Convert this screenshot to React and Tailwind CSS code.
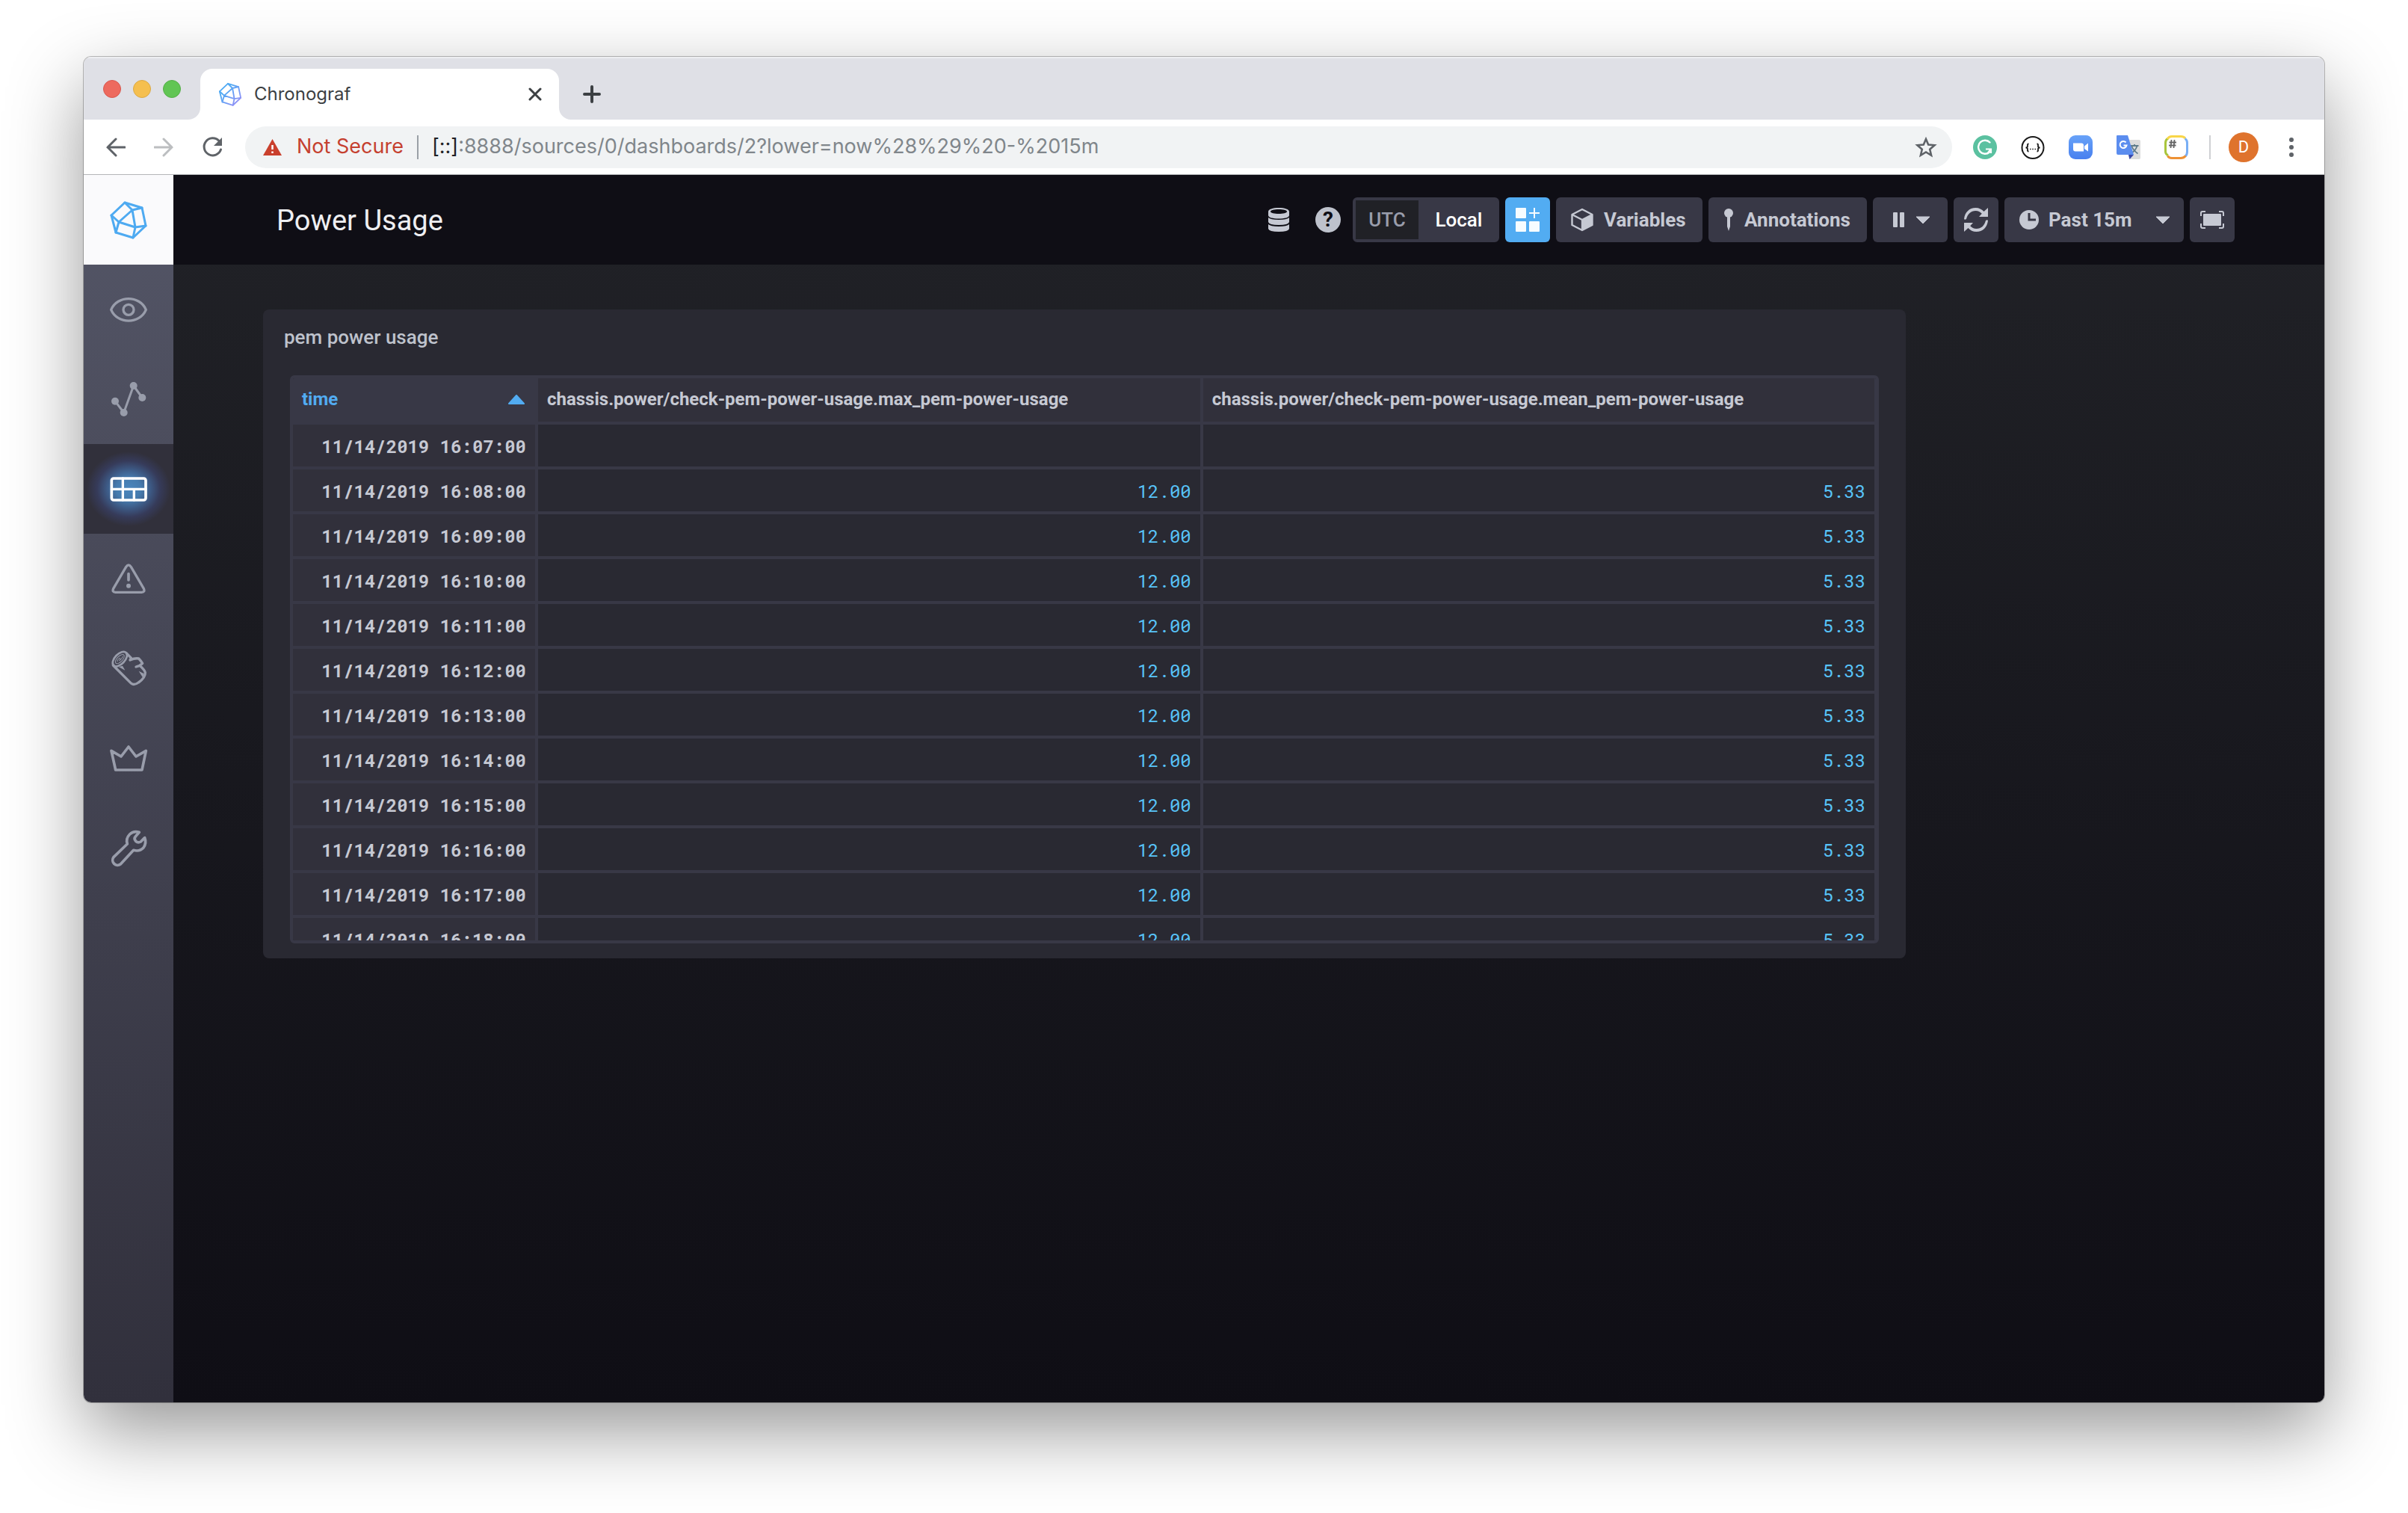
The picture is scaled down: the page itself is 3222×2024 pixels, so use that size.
import React from "react";

function LogoShape({ className, stroke }) {
  return (
    <svg viewBox="0 0 50 52" className={className} fill="none" stroke={stroke} strokeWidth="3" strokeLinejoin="round" strokeLinecap="round" aria-hidden="true">
      <defs>
        <linearGradient id="tabLogo" x1="0" y1="0" x2="1" y2="1">
          <stop offset="0.3" stopColor="#4fa9f3" />
          <stop offset="1" stopColor="#a08cf7" />
        </linearGradient>
      </defs>
      <path d="M20 3 43 10 48 34 31 50 8 43 2 20Z" />
      <path d="M20 3 30 13 43 10M30 13 12 29 34 36ZM2 20 12 29 8 43M48 34 34 36 31 50" />
    </svg>
  );
}

/* ---------- Browser chrome ---------- */

function TabFlare({ className }) {
  return (
    <svg viewBox="0 0 16 16" className={className} aria-hidden="true">
      <path d="M16 0V16H0A16 16 0 0 0 16 0Z" fill="#fff" />
    </svg>
  );
}

function TabStrip() {
  return (
    <div className="flex h-[84px] items-end bg-[#dfe0e6] shadow-[inset_0_2px_1px_#eeeff2]">
      <div className="flex h-[82px] items-center gap-4 pl-[26px]">
        <button aria-label="Close window" className="size-6 rounded-full border border-[#d8584f] bg-[#ed6a5e]" />
        <button aria-label="Minimize window" className="size-6 rounded-full border border-[#dba944] bg-[#f5bf4f]" />
        <button aria-label="Zoom window" className="size-6 rounded-full border border-[#54ae48] bg-[#61c554]" />
      </div>
      <TabFlare className="ml-[10px] size-4" />
      <div className="flex h-[68px] w-[480px] items-center rounded-t-2xl bg-white pl-6 pr-5">
        <LogoShape className="size-8" stroke="url(#tabLogo)" />
        <span className="ml-4 flex-1 font-[Inter,sans-serif] text-2xl text-[#3c4043]">Chronograf</span>
        <button aria-label="Close tab" className="grid size-6 place-items-center">
          <svg viewBox="0 0 18 18" className="size-[18px]" stroke="#3c4043" strokeWidth="3" strokeLinecap="round">
            <path d="M2 2 16 16M16 2 2 16" />
          </svg>
        </button>
      </div>
      <TabFlare className="size-4 -scale-x-100" />
      <button aria-label="New tab" className="ml-4 grid h-[68px] w-6 place-items-center">
        <svg viewBox="0 0 24 24" className="size-6" stroke="#3c4043" strokeWidth="4" strokeLinecap="round">
          <path d="M2 12H22M12 2V22" />
        </svg>
      </button>
    </div>
  );
}

function Extensions() {
  return (
    <div className="flex items-center gap-8">
      <button aria-label="Grammarly">
        <svg viewBox="0 0 32 32" className="size-8">
          <circle cx="16" cy="16" r="16" fill="#5bc1a0" />
          <path d="M22.5 9.5A9 9 0 1 0 22 22.5" fill="none" stroke="#fff" strokeWidth="2.4" strokeLinecap="round" />
          <path d="M17 18.5H24V24M23.5 19 20 23.5" fill="none" stroke="#fff" strokeWidth="2.2" />
        </svg>
      </button>
      <button aria-label="JSON viewer">
        <svg viewBox="0 0 32 32" className="size-8" fill="none" stroke="#1a1a1a">
          <circle cx="16" cy="16.5" r="14.5" strokeWidth="2" />
          <path d="M10.5 11.5C8.5 11.5 9 13 9 14.5S8 16.5 6.5 16.5C8 16.5 9 17 9 18.5S8.5 21.5 10.5 21.5M21.5 11.5C23.5 11.5 23 13 23 14.5S24 16.5 25.5 16.5C24 16.5 23 17 23 18.5S23.5 21.5 21.5 21.5" strokeWidth="1.8" />
          <path d="M12 18.5H13.5M15.25 18.5H16.75M18.5 18.5H20" strokeWidth="1.5" />
        </svg>
      </button>
      <button aria-label="Zoom">
        <svg viewBox="0 0 32 32" className="size-8">
          <defs>
            <linearGradient id="zoomFill" x1="0" y1="0" x2="0" y2="1">
              <stop offset="0" stopColor="#68a2f8" />
              <stop offset="1" stopColor="#4880ef" />
            </linearGradient>
          </defs>
          <rect width="32" height="32" rx="9" fill="url(#zoomFill)" />
          <path d="M6 10.5H17Q20 10.5 20 13.5V21.5H9Q6 21.5 6 18.5ZM21 14.5 26 10.5V21.5L21 18Z" fill="#fff" />
        </svg>
      </button>
      <button aria-label="Google Translate">
        <svg viewBox="0 0 32 32" className="size-8">
          <path d="M12 6H30Q32 6 32 8V30Q32 32 30 32H17Z" fill="#dcdcdc" />
          <path d="M19 14H29.5M24 12V14M27.5 14C26.5 18 23 22 19.5 24M20.5 15C22 19 25 22 28.5 24.5" fill="none" stroke="#607d8b" strokeWidth="1.8" />
          <path d="M16 26H23L17.5 32Z" fill="#3949ab" />
          <path d="M1 0H15L23 26H2Q0 26 0 24V1Q0 0 1 0Z" fill="#5b8def" />
          <path d="M12.5 9.5A4.5 4.5 0 1 0 13.5 13.5H9.5" fill="none" stroke="#fff" strokeWidth="2" />
        </svg>
      </button>
      <button aria-label="Hash extension">
        <svg viewBox="0 0 32 32" className="size-8" fill="none">
          <path d="M5 27Q1.500 25 1.500 22V10Q1.500 6 5 4" stroke="#a9c53c" strokeWidth="3" />
          <path d="M4 5Q6 1.500 10 1.500H22Q26 1.500 28 4" stroke="#f9d649" strokeWidth="3" />
          <path d="M27.500 4.500Q30.500 6 30.500 10V22Q30.500 26 28 28" stroke="#78aef5" strokeWidth="3" />
          <path d="M4.500 27.500Q6 30.500 10 30.500H22Q26 30.500 28.500 27.500" stroke="#ee9135" strokeWidth="3" />
          <path d="M9.500 6 8.500 17M13.500 6 12.500 17M6.500 9.500H16M6 13.500H15.500" stroke="#666" strokeWidth="1.8" />
        </svg>
      </button>
    </div>
  );
}

function AddressBar() {
  return (
    <div className="flex h-[74px] items-center border-b border-[#b4b6b8] bg-white pr-[38px]">
      <div className="flex items-center gap-[38px] pl-[30px]">
        <button aria-label="Back">
          <svg viewBox="0 0 26 26" className="size-[26px]" fill="none" stroke="#5f6368" strokeWidth="3" strokeLinecap="round">
            <path d="M25 13H2M13 2 2 13 13 24" />
          </svg>
        </button>
        <button aria-label="Forward">
          <svg viewBox="0 0 26 26" className="size-[26px]" fill="none" stroke="#bcbec0" strokeWidth="3" strokeLinecap="round">
            <path d="M1 13H24M13 2 24 13 13 24" />
          </svg>
        </button>
        <button aria-label="Reload">
          <svg viewBox="0 0 28 28" className="size-7">
            <path d="M23 5.500A11.500 11.500 0 1 0 25.500 17" fill="none" stroke="#5f6368" strokeWidth="3" strokeLinecap="round" />
            <path d="M27 1V12H16Z" fill="#5f6368" />
          </svg>
        </button>
      </div>
      <div className="ml-[30px] flex h-14 flex-1 items-center rounded-full bg-[#f1f3f4] pl-6 pr-5 font-[Inter,sans-serif] text-[27px]">
        <svg viewBox="0 0 25 22" className="h-[22px] w-[25px]" aria-hidden="true">
          <path d="M12.500 0 25 22H0Z" fill="#c9402d" />
          <path d="M12.500 8V14M12.500 16.500V19" stroke="#fff" strokeWidth="2.5" />
        </svg>
        <span className="ml-5 text-[#c5402f]">Not Secure</span>
        <span className="mx-[18px] h-8 w-0.5 bg-[#9aa0a6]" />
        <label htmlFor="address" className="text-[#202124]">[::]</label>
        <input id="address" defaultValue=":8888/sources/0/dashboards/2?lower=now%28%29%20-%2015m" className="min-w-0 flex-1 bg-transparent text-[#80868b] outline-none" />
        <button aria-label="Bookmark this page">
          <svg viewBox="0 0 30 30" className="size-[30px]" fill="none" stroke="#5f6368" strokeWidth="2.6">
            <path d="M15 4 18.200 11.600 26.500 12.300 20.200 17.700 22.100 25.800 15 21.500 7.900 25.800 9.800 17.700 3.500 12.300 11.800 11.600Z" />
          </svg>
        </button>
      </div>
      <div className="ml-7 flex items-center">
        <Extensions />
        <span className="ml-7 mr-6 h-8 w-0.5 bg-[#cfd0d3]" />
        <button className="size-10 rounded-full bg-[#df732d] font-[Roboto,sans-serif] text-[22px] text-white">D</button>
        <button aria-label="Browser menu" className="ml-[38px]">
          <svg viewBox="0 0 12 28" className="h-7 w-3" fill="#5f6368">
            <circle cx="6" cy="4" r="3" />
            <circle cx="6" cy="14" r="3" />
            <circle cx="6" cy="24" r="3" />
          </svg>
        </button>
      </div>
    </div>
  );
}

/* ---------- Side navigation ---------- */

const navItems = [
  {
    name: "Host List",
    art: (
      <g strokeWidth="10">
        <path d="M20 91C45 32 135 32 160 91C135 150 45 150 20 91Z" />
        <circle cx="90" cy="91" r="21" />
      </g>
    ),
  },
  {
    name: "Explore",
    art: (
      <g strokeWidth="9">
        <path d="M36 98 71 144 110 36 145 84" />
        <g fill="currentColor" stroke="none">
          <circle cx="36" cy="98" r="15" />
          <circle cx="71" cy="144" r="15" />
          <circle cx="110" cy="36" r="15" />
          <circle cx="145" cy="84" r="15" />
        </g>
      </g>
    ),
  },
  {
    name: "Dashboards",
    active: true,
    art: (
      <g strokeWidth="11">
        <rect x="22" y="48" width="137" height="87" rx="8" />
        <path d="M22 91H159M67 48V135M112 91V135" strokeWidth="10" />
      </g>
    ),
  },
  {
    name: "Alerting",
    art: (
      <g strokeWidth="10">
        <path d="M80 43Q90 28 100 43L151 130Q157 145 143 145H37Q23 145 29 130Z" />
        <path d="M90 71V96" strokeWidth="11" />
        <circle cx="90" cy="119" r="9" fill="currentColor" stroke="none" />
      </g>
    ),
  },
  {
    name: "Log Viewer",
    art: (
      <g strokeWidth="10">
        <ellipse cx="55" cy="53" rx="36" ry="20" transform="rotate(-46 55 53)" strokeWidth="8" />
        <ellipse cx="55" cy="53" rx="23" ry="11" transform="rotate(-46 55 53)" strokeWidth="3" />
        <path d="M45 62Q47 50 56 49Q58 53 53 59Q62 56 67 43" strokeWidth="3" />
        <path d="M28 78 101 151Q112 160 130 147Q158 128 157 107Q154 96 137 81" />
        <path d="M82 30 101 49 96 57Q116 48 131 51Q138 58 146 70Q138 79 120 84" />
        <path d="M50 84 76 98 66 80Z" fill="currentColor" stroke="none" />
        <path d="M131 101 152 112 148 128Q140 116 131 101Z" fill="currentColor" stroke="none" />
      </g>
    ),
  },
  {
    name: "Admin",
    art: <path d="M21 61 60 84 90 45 120 84 160 61 144 138H38Z" strokeWidth="11" />,
  },
  {
    name: "Configuration",
    art: (
      <path
        d="M133 28Q110 21 95 36Q78 53 85 75L30 128A20 20 0 0 0 58 156L110 100Q134 107 150 90Q163 72 155 50L139 66Q128 72 119 64Q110 54 118 45Z"
        strokeWidth="11"
      />
    ),
  },
];

function SideNav() {
  return (
    <nav className="flex w-[120px] flex-col bg-linear-to-b from-[#545667] to-[#31303c]">
      <a href="#home" aria-label="Chronograf home" className="grid h-[120px] place-items-center bg-[#fafafc]">
        <LogoShape className="h-[52px] w-[50px]" stroke="#4eaaf1" />
      </a>
      {navItems.map((item) => (
        <a
          key={item.name}
          href="#nav"
          aria-label={item.name}
          className={
            item.active
              ? "grid h-[120px] place-items-center bg-[#31303b] bg-[radial-gradient(ellipse_56px_50px_at_center,#4b86bd_0%,#467bae_30%,#3c5680_55%,#363b5a_75%,#31303b_100%)] text-white"
              : "grid h-[120px] place-items-center text-[#999dab]"
          }
        >
          <svg viewBox="0 0 180 180" className="size-[60px]" fill="none" stroke="currentColor" strokeLinejoin="round" strokeLinecap="round">
            {item.art}
          </svg>
        </a>
      ))}
    </nav>
  );
}

/* ---------- Dashboard header ---------- */

function Caret() {
  return (
    <svg viewBox="0 0 20 11" className="h-[11px] w-5" fill="currentColor" stroke="currentColor" strokeLinejoin="round" aria-hidden="true">
      <path d="M1 1H19L10 10Z" />
    </svg>
  );
}

function DashboardHeader() {
  return (
    <header className="flex h-[120px] items-center justify-between bg-[#0f0e15] pl-[138px] pr-[120px] text-[26px] font-bold text-[#c6c9d3]">
      <h1 className="pt-0.5 text-[38px] font-normal text-[#eeeff2]">Power Usage</h1>
      <div className="flex items-center gap-2">
        <button aria-label="Sources" className="mr-[27px]">
          <svg viewBox="0 0 28 32" className="h-8 w-7" fill="currentColor">
            <path fillRule="evenodd" d="M14 0C22 0 28 2 28 5V10C28 13 22 14.500 14 14.500S0 13 0 10V5C0 2 6 0 14 0ZM14 2C8 2 3 3.200 3 5S8 8 14 8 25 6.800 25 5 20 2 14 2Z" />
            <path d="M0 13Q3 16 14 16T28 13V19Q27 23 14 23T0 19ZM0 22Q3 25 14 25T28 22V28Q27 32 14 32T0 28Z" />
          </svg>
        </button>
        <button aria-label="Help" className="mr-2 grid size-[34px] place-items-center rounded-full bg-[#bec2cc] text-[28px] leading-none text-[#0f0e15]">
          ?
        </button>
        <div className="flex h-[60px] rounded-md border-4 border-[#383846] bg-[#383846]">
          <button className="w-[84px] bg-[#202126] font-medium text-[#999dab]">UTC</button>
          <button className="w-[104px] pl-1 font-medium text-white">Local</button>
        </div>
        <button aria-label="Add cell" className="grid size-[60px] place-items-center rounded-md bg-[#52acf2]">
          <svg viewBox="0 0 32 32" className="size-8" fill="#f6fcff">
            <rect width="14" height="14" rx="1" />
            <rect y="18" width="14" height="14" rx="1" />
            <rect x="18" y="18" width="14" height="14" rx="1" />
            <path d="M24 0H26V6H32V8H26V14H24V8H18V6H24Z" />
          </svg>
        </button>
        <button className="flex h-[60px] w-[196px] items-center gap-[14px] rounded-md bg-[#383846] pl-5">
          <svg viewBox="0 0 30 32" className="h-8 w-[30px]" aria-hidden="true">
            <path d="M15 2 28.500 9V23L15 30 1.500 23V9ZM1.500 9 15 16 28.500 9M15 16V30" fill="none" stroke="currentColor" strokeWidth="2.4" strokeLinejoin="round" />
            <path d="M15 16 28.500 9V23L15 30Z" fill="currentColor" />
          </svg>
          Variables
        </button>
        <button className="flex h-[60px] w-[212px] items-center gap-[14px] rounded-md bg-[#383846] pl-5">
          <svg viewBox="0 0 14 30" className="h-[30px] w-[14px]" fill="currentColor" aria-hidden="true">
            <circle cx="7" cy="6" r="6" />
            <path d="M5 10H9V24L7 30 5 24Z" />
          </svg>
          Annotations
        </button>
        <button aria-label="Auto refresh: paused" className="flex h-[60px] w-[100px] items-center gap-[14px] rounded-md bg-[#383846] pl-[27px]">
          <svg viewBox="0 0 16 20" className="h-5 w-4" fill="currentColor">
            <rect width="6" height="20" rx="1" />
            <rect x="9" width="6" height="20" rx="1" />
          </svg>
          <Caret />
        </button>
        <button aria-label="Refresh" className="grid size-[60px] place-items-center rounded-md bg-[#383846]">
          <svg viewBox="0 0 32 32" className="size-8" fill="currentColor">
            <path d="M0 15C1 6 7 0 15.500 0C20 0 24 2 26.500 5L32 0V12H20L23.800 7.800C21.500 5.500 19 4 15.500 4C9 4 5 8 3 15Q1 16.500 0 15Z" />
            <path d="M32 17C31 26 25 32 16.500 32C12 32 8 30 5.500 27L0 32V20H12L8.200 24.200C10.500 26.500 13 28 16.500 28C23 28 27 24 29 17Q31 15.500 32 17Z" />
          </svg>
        </button>
        <label className="flex h-[60px] w-[240px] items-center rounded-md bg-[#383846] pl-5 pr-[18px]">
          <svg viewBox="0 0 26 26" className="size-[26px]" aria-hidden="true">
            <circle cx="13" cy="13" r="13" fill="currentColor" />
            <path d="M13 4V13H22" fill="none" stroke="#383846" strokeWidth="3" />
          </svg>
          <select aria-label="Time range" className="ml-[13px] flex-1 appearance-none bg-transparent outline-none">
            <option>Past 15m</option>
          </select>
          <Caret />
        </label>
        <button aria-label="Presentation mode" className="grid size-[60px] place-items-center rounded-md bg-[#383846]">
          <svg viewBox="0 0 32 24" className="h-6 w-8">
            <rect x="4" y="4" width="24" height="16" rx="1" fill="currentColor" />
            <path d="M1 7V3Q1 1 3 1H7M25 1H29Q31 1 31 3V7M31 17V21Q31 23 29 23H25M7 23H3Q1 23 1 21V17" fill="none" stroke="currentColor" strokeWidth="2" />
          </svg>
        </button>
      </div>
    </header>
  );
}

/* ---------- Table cell ---------- */

const rows = Array.from({ length: 12 }, (_, i) => ({
  time: `11/14/2019 16:${String(i + 7).padStart(2, "0")}:00`,
  max: i === 0 ? "" : "12.00",
  mean: i === 0 ? "" : "5.33",
}));

function PowerTable() {
  return (
    <div className="mx-9 mt-3 h-[760px] overflow-hidden rounded-md border-4 border-[#383846]">
      <table className="w-full table-fixed border-separate border-spacing-0 text-2xl text-[#c6c9d3]">
        <colgroup>
          <col className="w-[328px]" />
          <col className="w-[42%]" />
          <col />
        </colgroup>
        <thead>
          <tr className="h-[62px] text-left">
            <th className="border-b-4 border-[#383846] bg-[#383846] pb-0.5 pl-3 pr-[18px] text-[#52acf2]" aria-sort="ascending">
              <button className="flex w-full items-center justify-between font-bold">
                time
                <svg viewBox="0 0 22 13" className="h-[13px] w-[22px]" fill="currentColor" stroke="currentColor" strokeWidth="2" strokeLinejoin="round" aria-hidden="true">
                  <path d="M1 12 11 1 21 12Z" />
                </svg>
              </button>
            </th>
            <th className="border-b-4 border-r-4 border-[#383846] bg-[#31303b] px-3 pb-0.5">chassis.power/check-pem-power-usage.max_pem-power-usage</th>
            <th className="border-b-4 border-r-2 border-[#383846] bg-[#31303b] px-3 pb-0.5">chassis.power/check-pem-power-usage.mean_pem-power-usage</th>
          </tr>
        </thead>
        <tbody className="text-right font-['Roboto_Mono','DejaVu_Sans_Mono',monospace]">
          {rows.map((row) => (
            <tr key={row.time} className="h-[60px] text-[#58c4f9]">
              <td className="whitespace-nowrap border-b-4 border-r-4 border-[#383846] bg-[#31303b] px-3 pt-0.5 font-bold text-[#c6c9d3]">{row.time}</td>
              <td className="border-b-4 border-r-4 border-[#383846] px-3 pt-0.5">{row.max}</td>
              <td className="border-b-4 border-r-2 border-[#383846] px-3 pt-0.5">{row.mean}</td>
            </tr>
          ))}
        </tbody>
      </table>
    </div>
  );
}

export default function App() {
  return (
    <div className="flex min-h-screen flex-col bg-white px-[112px] pb-[148px] pt-[76px] font-[Roboto,sans-serif]">
      <div className="flex flex-1 flex-col overflow-hidden rounded-[10px] shadow-[0_0_0_1px_rgba(0,0,0,0.25),0_38px_100px_rgba(0,0,0,0.41)]">
        <TabStrip />
        <AddressBar />
        <div className="flex flex-1">
          <SideNav />
          <div className="flex min-w-0 flex-1 flex-col bg-linear-to-b from-[#212227] to-[#0f0e15]">
            <DashboardHeader />
            <main className="flex-1 px-[120px] pt-[60px]">
              <section className="w-10/12 rounded-lg bg-[#292932] pb-5">
                <h2 className="flex h-[76px] items-center px-7 pb-0.5 text-[26px] font-medium text-[#bec2cc]">pem power usage</h2>
                <PowerTable />
              </section>
            </main>
          </div>
        </div>
      </div>
    </div>
  );
}
